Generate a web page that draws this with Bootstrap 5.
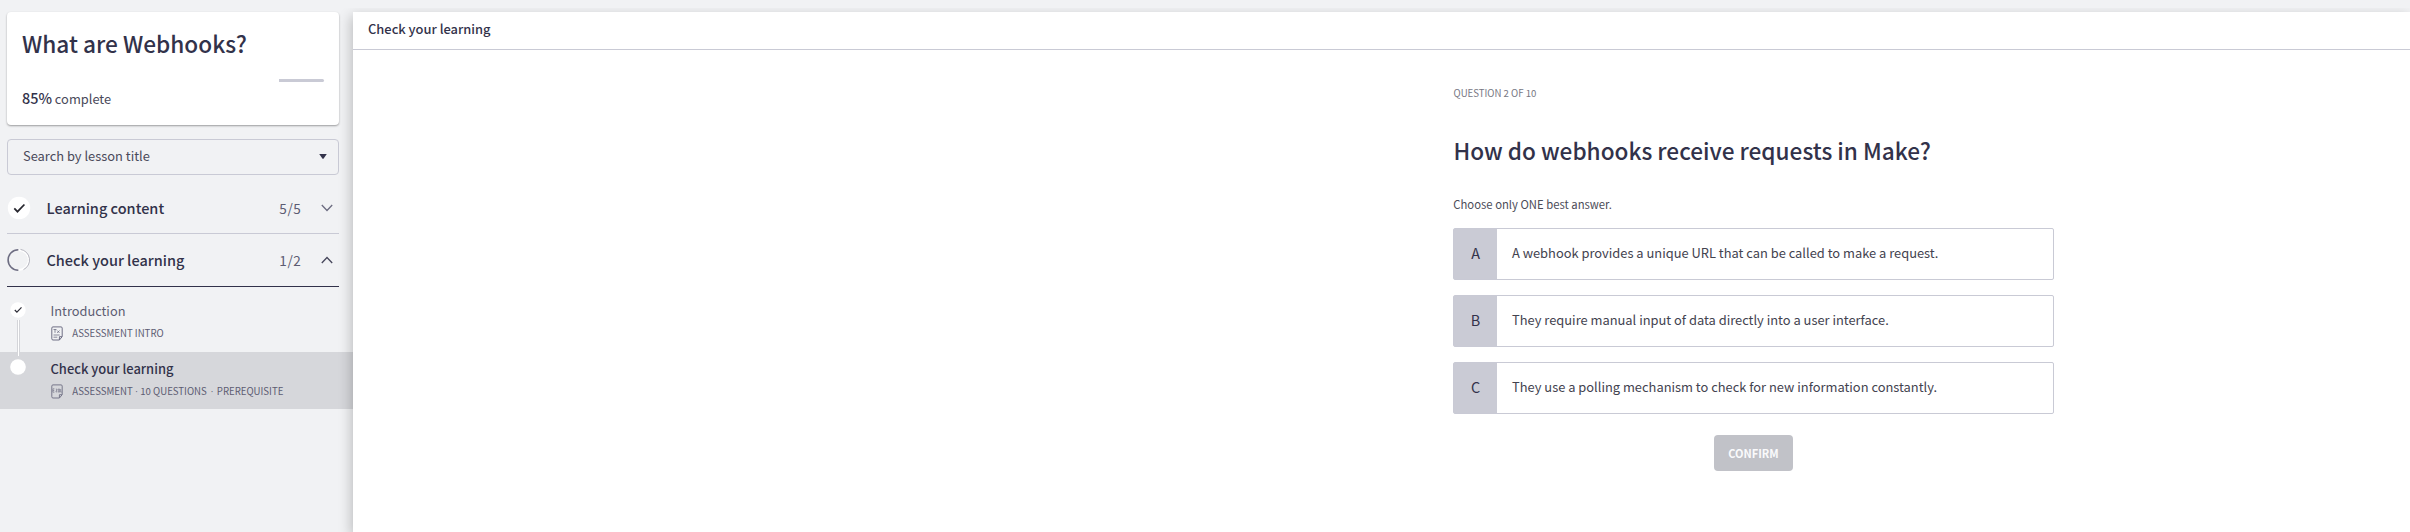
<!DOCTYPE html>
<html lang="en">
<head>
<meta charset="utf-8">
<title>What are Webhooks?</title>
<link href="https://cdn.jsdelivr.net/npm/bootstrap@5.3.0/dist/css/bootstrap.min.css" rel="stylesheet">
<style>
:root { --ink: #32324a; --muted: #5c5c72; --line: #c9cad5; }
body { font-family: "Noto Sans CJK SC", sans-serif; background: #f1f2f4; color: var(--ink); height: 532px; overflow: hidden; }
.sidebar { width: 353px; padding-top: 12px; }
.side-inner { padding: 0 14px 0 7px; }
.course-card { height: 113px; border: 0; border-radius: 4px; padding: 18px 15px 0; box-shadow: 0 1px 2px rgba(0,0,0,.36); }
.course-title { font-size: 22.65px; line-height: 28px; font-weight: 500; margin: 0; }
.course-progress { height: 3px; margin-top: 21px; background: #fff; border-radius: 2px; }
.course-progress .rest { width: 15%; background: var(--line); border-radius: 0 2px 2px 0; }
.course-status { font-size: 12.85px; line-height: 20px; margin-top: 6px; color: #4a4a5a; white-space: pre; }
.course-status strong { font-size: 14.43px; font-weight: 500; color: var(--ink); }
.lesson-search { height: 36px; margin-top: 14px; border: 1px solid var(--line); border-radius: 4px; padding: 0 11px 2px 15px; font-size: 12.89px; color: #4a4a5a; }
.module { height: 53px; border-bottom: 1px solid var(--line); padding-right: 6px; }
.module.first { height: 59px; padding-top: 7px; }
.module.open { border-color: var(--ink); }
.module-title { font-size: 14.5px; font-weight: 500; line-height: 20px; margin-left: 15.5px; }
.module-count { font-size: 13.6px; line-height: 20px; letter-spacing: .6px; color: var(--muted); margin-right: 19.5px; }
.lesson { height: 57px; padding-left: 10px; }
.lesson.current { background: #d6d7db; }
.lesson-list { padding-top: 8px; }
.marker { width: 16px; margin-top: 7px; z-index: 1; }
.lesson-text { margin-left: 24.5px; padding-top: 7px; }
.lesson-name { font-size: 12.81px; line-height: 18px; color: var(--muted); }
.current .lesson-name { font-size: 12.94px; font-weight: 500; color: var(--ink); padding-top: 1px; margin-bottom: -1px; }
.lesson-meta { font-size: 9.64px; line-height: 14px; height: 14px; margin-top: 6px; color: var(--muted); white-space: pre; }
.lesson-meta svg { margin-right: 9.8px; }
.current .lesson-meta { margin-top: 7px; }
.dot { font-family: "Open Sans", sans-serif; }
.dot.wide { letter-spacing: -.5px; }
.link-line { width: 3px; height: 36px; left: 17px; top: 33px; background: #fff; border: solid #d4d5d9; border-width: 0 1px; box-sizing: border-box; }
.main-pane { margin-top: 12px; background: #fff; box-shadow: -2px 4px 12px rgba(0,0,0,.22); min-width: 0; clip-path: inset(-4px 0 0 -20px); }
.pane-head { height: 38px; border-bottom: 1px solid var(--line); padding: 6px 15px; font-size: 12.9px; font-weight: 500; line-height: 21px; }
.quiz { width: 601px; margin-left: 1100px; padding-top: 36px; }
.step-label { font-size: 9.64px; line-height: 14px; color: #777783; padding-left: .5px; }
.question { font-size: 22.6px; line-height: 30px; font-weight: 500; margin: 36px 0 0; padding-left: .5px; white-space: nowrap; }
.hint { font-size: 11.3px; line-height: 18px; margin-top: 29px; padding-left: .3px; color: #4c4c58; }
.options { margin-top: 15px; gap: 14.6px; }
.option { height: 52.2px; border: 1px solid var(--line); border-radius: 2px; font-size: 12.89px; color: #43434f; }
.option-key { width: 43px; background: #cacbd5; color: var(--ink); font-size: 14.4px; padding-bottom: 2px; }
.option-text { padding: 0 0 2px 15px; }
.confirm-btn { width: 79px; height: 36px; margin-top: 21px; padding: 0; border: 0; border-radius: 4px; font-size: 11px; font-weight: 700; }
.confirm-btn:disabled { background: #c1c2c8; color: #fafafc; opacity: 1; }
svg { display: block; flex: none; }
</style>
</head>
<body class="d-flex">
<aside class="sidebar flex-shrink-0">
  <div class="side-inner">
    <div class="card course-card">
      <h1 class="course-title">What are Webhooks?</h1>
      <div class="course-progress d-flex justify-content-end"><div class="rest"></div></div>
      <div class="course-status"><strong>85%</strong> complete</div>
    </div>
    <div class="lesson-search d-flex align-items-center justify-content-between">
      <span>Search by lesson title</span>
      <svg width="8" height="5" viewBox="0 0 8 5"><path d="M.2 0h7.6L4.6 4.6q-.6.6-1.2 0Z" fill="#32324a"/></svg>
    </div>
    <div class="module first d-flex align-items-center">
      <svg width="24" height="24" viewBox="0 0 24 24"><circle cx="12" cy="12" r="11.2" fill="#fff"/><path d="m7.3 12.3 3.2 3.4L17.4 8.5" fill="none" stroke="#26262e" stroke-width="1.7"/></svg>
      <span class="module-title me-auto">Learning content</span>
      <span class="module-count">5/5</span>
      <svg width="12" height="8" viewBox="0 0 12 8"><path d="m.8 1 5.2 5.5L11.2 1" fill="none" stroke="#6c6c80" stroke-width="1.3"/></svg>
    </div>
    <div class="module open d-flex align-items-center">
      <svg width="24" height="24" viewBox="0 0 24 24"><path d="M12 2.2a9.8 9.8 0 0 1 0 19.6" fill="none" stroke="#fff" stroke-width="1.8"/><path d="M13.5 1.4a10.7 10.7 0 0 1 3 20.2" fill="none" stroke="#9696a4" stroke-width=".7"/><path d="M11.3 1.8a10.2 10.2 0 0 0 0 20.4" fill="none" stroke="#6d6d82" stroke-width="1.6"/></svg>
      <span class="module-title me-auto">Check your learning</span>
      <span class="module-count">1/2</span>
      <svg width="12" height="8" viewBox="0 0 12 8"><path d="M.8 7 6 1.5 11.2 7" fill="none" stroke="#47475c" stroke-width="1.3"/></svg>
    </div>
  </div>
  <div class="lesson-list position-relative">
    <div class="lesson d-flex">
      <svg class="marker position-relative" height="16" viewBox="0 0 16 16"><circle cx="8" cy="8" r="7.7" fill="#fff"/><path d="m4.8 8 2.1 2.2L11.5 5.4" fill="none" stroke="#2e2e38" stroke-width="1.2"/></svg>
      <div class="lesson-text">
        <div class="lesson-name">Introduction</div>
        <div class="lesson-meta d-flex align-items-center"><svg width="12" height="15" viewBox="0 0 12 15" fill="none" stroke="#6e6e84"><path d="M2 .9h8q1.2 0 1.2 1.2v8.6L8.4 14H2Q.8 14 .8 12.8V2.1Q.8.9 2 .9ZM11 10.7H8.4V14"/><path d="M2.5 3.5h3M4 3.5v3.3M6.2 4.5l2.3 2.4M8.5 4.5 6.2 6.9M2.5 9h6.2M2.5 11.2h3.8" stroke-width=".8"/></svg><span>ASSESSMENT INTRO</span></div>
      </div>
    </div>
    <div class="link-line position-absolute"></div>
    <div class="lesson current d-flex">
      <svg class="marker position-relative" height="16" viewBox="0 0 16 16"><circle cx="8" cy="8" r="7.8" fill="#fff"/></svg>
      <div class="lesson-text">
        <div class="lesson-name">Check your learning</div>
        <div class="lesson-meta d-flex align-items-center"><svg width="12" height="15" viewBox="0 0 12 15" fill="none" stroke="#77778a"><path d="M2 .9h8q1.2 0 1.2 1.2v8.6L8.4 14H2Q.8 14 .8 12.8V2.1Q.8.9 2 .9ZM11 10.7H8.4V14"/><path d="M3.4 4.8H1.9v3.4h1.5M1.9 6.5h1.3M4.9 5.2h1.2l-1.2 2.7h1.3M7.3 5v3.1h1.3V5ZM9.7 5v3.1h1" stroke-width=".7"/></svg><span>ASSESSMENT<span class="dot"> · </span>10 QUESTIONS<span class="dot wide">  ·  </span>PREREQUISITE</span></div>
      </div>
    </div>
  </div>
</aside>
<main class="main-pane flex-grow-1">
  <header class="pane-head">Check your learning</header>
  <section class="quiz">
    <div class="step-label">QUESTION 2 OF 10</div>
    <h2 class="question">How do webhooks receive requests in Make?</h2>
    <div class="hint">Choose only ONE best answer.</div>
    <div class="options d-flex flex-column">
      <div class="option d-flex"><div class="option-key d-flex align-items-center justify-content-center">A</div><div class="option-text d-flex align-items-center">A webhook provides a unique URL that can be called to make a request.</div></div>
      <div class="option d-flex"><div class="option-key d-flex align-items-center justify-content-center">B</div><div class="option-text d-flex align-items-center">They require manual input of data directly into a user interface.</div></div>
      <div class="option d-flex"><div class="option-key d-flex align-items-center justify-content-center">C</div><div class="option-text d-flex align-items-center">They use a polling mechanism to check for new information constantly.</div></div>
    </div>
    <button class="btn confirm-btn d-block mx-auto" disabled>CONFIRM</button>
  </section>
</main>
<script src="https://cdn.jsdelivr.net/npm/bootstrap@5.3.0/dist/js/bootstrap.bundle.min.js"></script>
</body>
</html>
